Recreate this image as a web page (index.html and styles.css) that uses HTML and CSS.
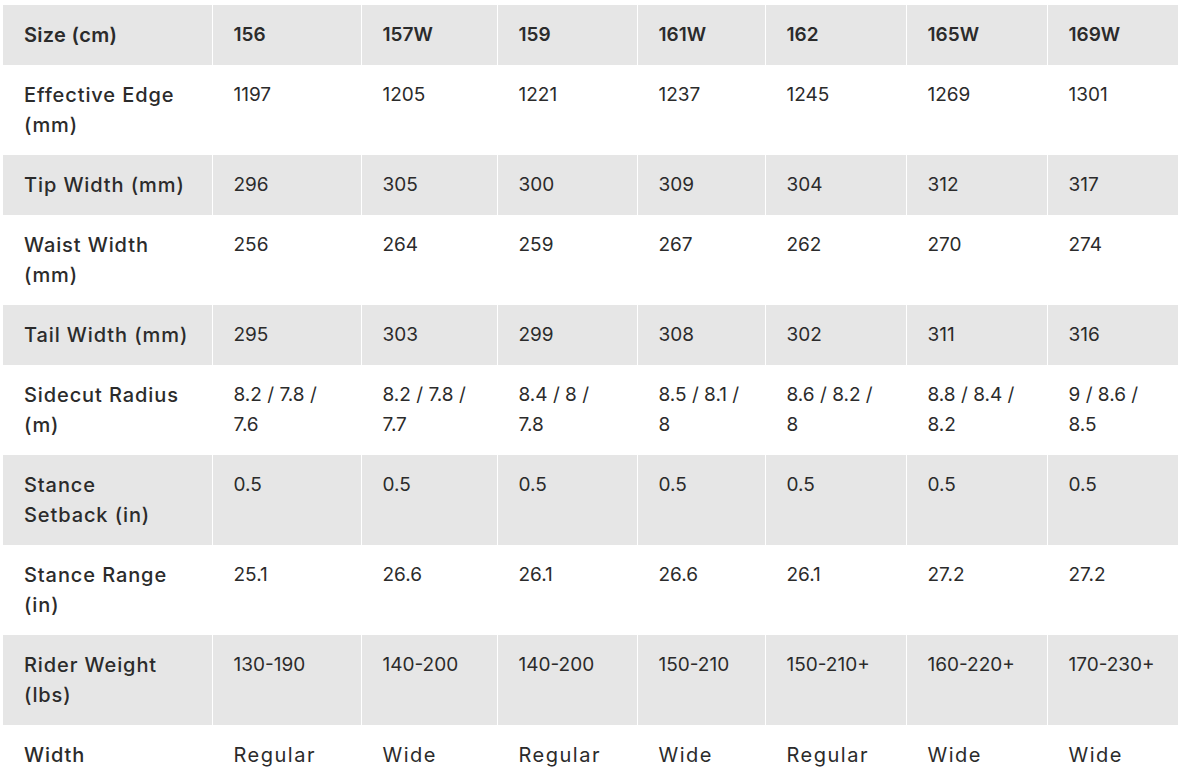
FILE: index.html
```html
<!DOCTYPE html>
<html>
<head>
<meta charset="utf-8">
<link rel="stylesheet" href="styles.css">
</head>
<body>
<div class="wrap">
<table class="specs">
<colgroup>
<col class="c1"><col class="c2"><col class="c3"><col class="c4"><col class="c5"><col class="c6"><col class="c7"><col class="c8">
</colgroup>
<thead>
<tr class="shade"><th class="label">Size (cm)</th><th>156</th><th>157W</th><th>159</th><th>161W</th><th>162</th><th>165W</th><th>169W</th></tr>
</thead>
<tbody>
<tr><th class="label">Effective Edge<br>(mm)</th><td>1197</td><td>1205</td><td>1221</td><td>1237</td><td>1245</td><td>1269</td><td>1301</td></tr>
<tr class="shade"><th class="label">Tip Width (mm)</th><td>296</td><td>305</td><td>300</td><td>309</td><td>304</td><td>312</td><td>317</td></tr>
<tr><th class="label">Waist Width<br>(mm)</th><td>256</td><td>264</td><td>259</td><td>267</td><td>262</td><td>270</td><td>274</td></tr>
<tr class="shade"><th class="label">Tail Width (mm)</th><td>295</td><td>303</td><td>299</td><td>308</td><td>302</td><td>311</td><td>316</td></tr>
<tr><th class="label">Sidecut Radius<br>(m)</th><td>8.2 / 7.8 /<br>7.6</td><td>8.2 / 7.8 /<br>7.7</td><td>8.4 / 8 /<br>7.8</td><td>8.5 / 8.1 /<br>8</td><td>8.6 / 8.2 /<br>8</td><td>8.8 / 8.4 /<br>8.2</td><td>9 / 8.6 /<br>8.5</td></tr>
<tr class="shade"><th class="label">Stance<br>Setback (in)</th><td>0.5</td><td>0.5</td><td>0.5</td><td>0.5</td><td>0.5</td><td>0.5</td><td>0.5</td></tr>
<tr><th class="label">Stance Range<br>(in)</th><td>25.1</td><td>26.6</td><td>26.1</td><td>26.6</td><td>26.1</td><td>27.2</td><td>27.2</td></tr>
<tr class="shade"><th class="label">Rider Weight<br>(lbs)</th><td>130-190</td><td>140-200</td><td>140-200</td><td>150-210</td><td>150-210+</td><td>160-220+</td><td>170-230+</td></tr>
<tr><th class="label">Width</th><td class="word">Regular</td><td class="word">Wide</td><td class="word">Regular</td><td class="word">Wide</td><td class="word">Regular</td><td class="word">Wide</td><td class="word">Wide</td></tr>
</tbody>
</table>
</div>
</body>
</html>
```
FILE: styles.css
```css
html, body {
  margin: 0;
  padding: 0;
  background: #ffffff;
}
.wrap {
  padding: 5px 0 0 3px;
}
.specs {
  width: 1175px;
  border-collapse: collapse;
  table-layout: fixed;
  font-family: Inter, "Liberation Sans", sans-serif;
  font-size: 19px;
  line-height: 30px;
  color: #2b2b2b;
}
.c1 { width: 209px; }
.c2 { width: 149px; }
.c3 { width: 136px; }
.c4 { width: 140px; }
.c5 { width: 128px; }
.c6 { width: 141px; }
.c7 { width: 141px; }
.c8 { width: 131px; }
.specs th, .specs td {
  text-align: left;
  vertical-align: top;
  padding: 15px 6px 15px 21px;
  border-left: 1px solid #ffffff;
  font-weight: 400;
  white-space: nowrap;
}
.specs th:first-child {
  border-left: none;
}
.specs tbody th {
  font-weight: 500;
}
.specs .label {
  font-size: 20px;
  letter-spacing: 0.9px;
}
.specs thead th {
  font-weight: 600;
}
.specs thead .label {
  letter-spacing: 0.3px;
}
.specs .word {
  font-size: 20px;
  letter-spacing: 1.5px;
}
.shade th, .shade td {
  background: #e6e6e6;
}
```
